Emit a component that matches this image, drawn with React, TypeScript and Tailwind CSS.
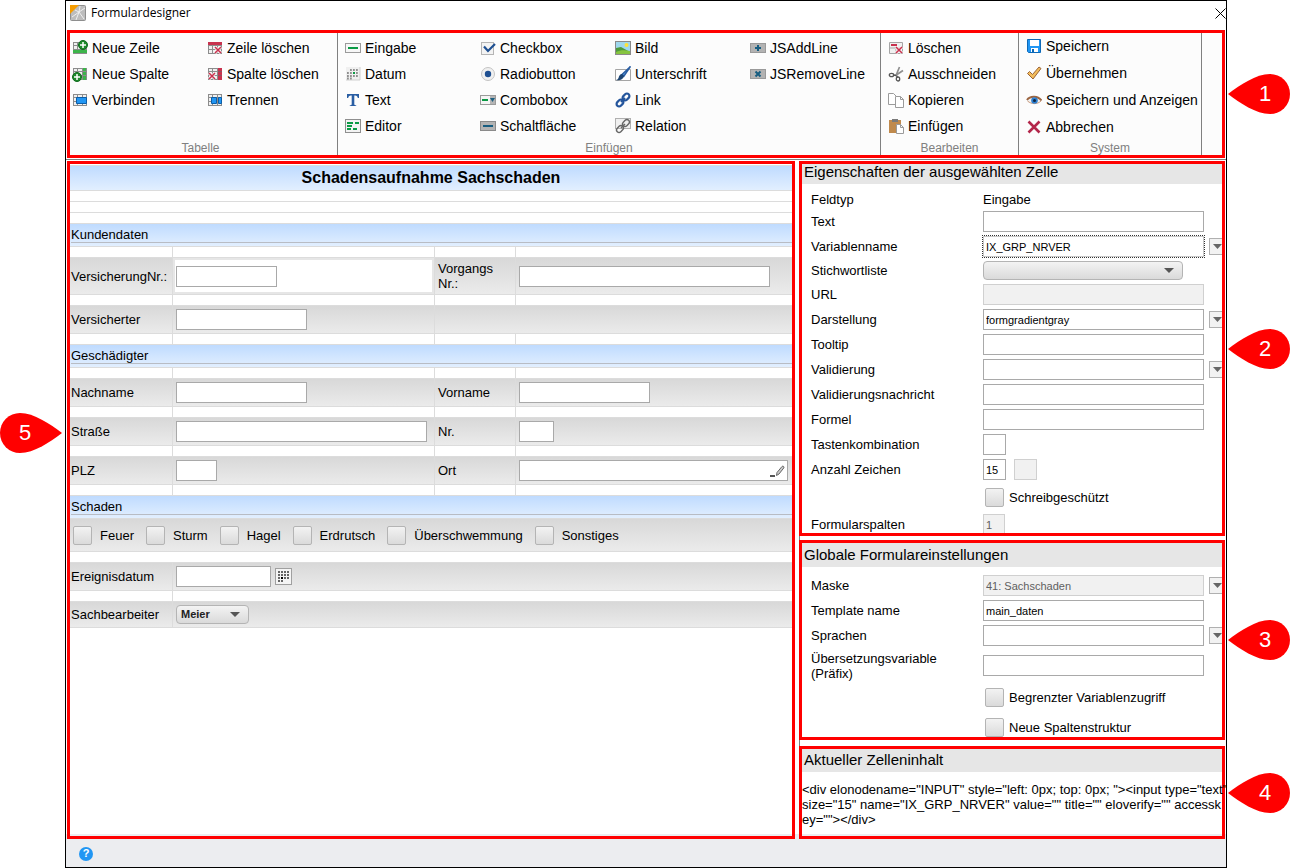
import type { ReactNode } from "react";

/* icons */

const Svg = ({ children }: { children: ReactNode }) => (
  <svg width="16" height="16" viewBox="0 0 16 16" fill="none" className="shrink-0">
    {children}
  </svg>
);

const Grid = () => (
  <g shapeRendering="crispEdges">
    <rect x="1" y="2" width="14" height="12" fill="#f0f0f0" />
    <path d="M1 2.500h14M1 5.500h14M1 9.500h14M1 13.500h14M1.500 2v12M5.500 2v12M10.500 2v12M14.500 2v12" stroke="#8c8c8c" />
  </g>
);

const Plus = ({ x, y }: { x: number; y: number }) => (
  <g>
    <circle cx={x} cy={y} r="4.5" fill="#1f8a2c" stroke="#0f6b1d" />
    <path d={`M${x - 3} ${y}h6M${x} ${y - 3}v6`} stroke="#fff" strokeWidth="1.5" />
  </g>
);

const RedX = ({ x, y }: { x: number; y: number }) => (
  <g>
    <path d={`M${x} ${y}l6 6m0-6l-6 6`} stroke="#fff" strokeWidth="3" />
    <path d={`M${x} ${y}l6 6m0-6l-6 6`} stroke="#c8324e" strokeWidth="1.6" />
  </g>
);

const RowAddIcon = () => (
  <Svg>
    <Grid />
    <path d="M1 10h14v4H1z" fill="#3cb54a" />
    <path d="M1 13.500h14" stroke="#8c8c8c" />
    <Plus x={11} y={5} />
  </Svg>
);
const ColAddIcon = () => (
  <Svg>
    <Grid />
    <path d="M11 2h3v12h-3z" fill="#3cb54a" />
    <path d="M11 5.500h3M11 9.500h3" stroke="#8c8c8c" />
    <Plus x={5} y={11} />
  </Svg>
);
const RowDelIcon = () => (
  <Svg>
    <Grid />
    <path d="M1 2h14v3H1z" fill="#c8324e" />
    <RedX x={8} y={7} />
  </Svg>
);
const ColDelIcon = () => (
  <Svg>
    <Grid />
    <path d="M11 2h4v12h-4z" fill="#c8324e" />
    <path d="M11 5.500h4M11 9.500h4" stroke="#8c5560" />
    <RedX x={2} y={7} />
  </Svg>
);
const MergeIcon = () => (
  <Svg>
    <Grid />
    <path d="M4.500 5.500h10v6h-10z" fill="#2196f3" stroke="#0d5fa8" />
  </Svg>
);
const SplitIcon = () => (
  <Svg>
    <Grid />
    <path d="M4.500 5.500h5v6h-5zM11.500 5.500h3v6h-3z" fill="#2196f3" stroke="#0d5fa8" />
  </Svg>
);
const InputIcon = () => (
  <Svg>
    <rect x="0.5" y="3.500" width="15" height="9" fill="#f7f7f7" stroke="#9b9b9b" />
    <path d="M3 8h10" stroke="#0a9a44" strokeWidth="2" />
  </Svg>
);
const DateIcon = () => (
  <Svg>
    <rect x="1" y="1" width="14" height="13" fill="#f0f0f0" />
    <path d="M15 1v13H1" stroke="#d0d0d0" />
    <path d="M5 4h9M2 7h12M2 10h12M2 12.500h6" stroke="#8f8f8f" strokeWidth="1.800" strokeDasharray="1.800 1.200" />
    <path d="M8 6h2v2H8z" fill="#0a9a44" />
  </Svg>
);
const TextIcon = () => (
  <Svg>
    <path d="M2 2h12v4h-1.200c-.3-1.600-.9-2.600-2.800-2.600h-.7v8.600c0 1 .4 1.200 1.900 1.300V14H4.800v-.7c1.500-.1 1.900-.3 1.900-1.300V3.400H6C4.100 3.400 3.500 4.400 3.200 6H2z" fill="#2a5ea3" />
  </Svg>
);
const EditorIcon = () => (
  <Svg>
    <rect x="0.5" y="1.500" width="15" height="13" fill="#f3f3f3" stroke="#8f8f8f" />
    <path d="M2 5h6M10 5h4M2 8h5M2 11h4M8 11h4" stroke="#0a9a44" strokeWidth="2" />
  </Svg>
);
const CheckIcon = () => (
  <Svg>
    <rect x="1.500" y="2.500" width="12" height="12" fill="#f3f3f3" stroke="#b5b5b5" />
    <path d="M4 6.500l4 4.500 7-7" stroke="#1e4f91" strokeWidth="2.200" />
  </Svg>
);
const RadioIcon = () => (
  <Svg>
    <circle cx="8" cy="8" r="6.500" fill="#f0f0f0" stroke="#c4c4c4" />
    <circle cx="8" cy="8" r="3.200" fill="#1e4f91" />
  </Svg>
);
const ComboIcon = () => (
  <Svg>
    <rect x="0.5" y="3.500" width="15" height="9" fill="#f5f5f5" stroke="#9b9b9b" />
    <path d="M10 4h5v8h-5z" fill="#b5b5b5" />
    <path d="M2 8h6" stroke="#0a9a44" strokeWidth="2" />
    <path d="M10 6h5l-2.500 4z" fill="#1d5f80" />
  </Svg>
);
const ButtonIcon = () => (
  <Svg>
    <rect x="0.5" y="3.500" width="15" height="9" fill="#b3b3b3" stroke="#8a8a8a" />
    <path d="M3 8h10" stroke="#175d80" strokeWidth="2" />
  </Svg>
);
const ImageIcon = () => (
  <Svg>
    <rect x="0.5" y="1.500" width="15" height="13" fill="#9fd8ee" stroke="#8a8a8a" />
    <circle cx="11.500" cy="5" r="2" fill="#ffe338" />
    <path d="M1 8l5-1 9 5v2H1z" fill="#4d9a3c" />
    <path d="M1 12c4-2 9-2 14-1v3H1z" fill="#86c440" />
  </Svg>
);
const SignIcon = () => (
  <Svg>
    <path d="M0.500 3.500h15v11h-15z" fill="#fff" stroke="#a5a5a5" />
    <path d="M15.500.5L7 8.500l1.800 1.800z" fill="#5b9bdc" stroke="#2a5ea3" strokeWidth="1.500" />
    <path d="M7 8c-2 0-3 2-3.500 4-.5 1-1.500 2-2.500 2 3 1 7 0 8-4z" fill="#1e4674" />
  </Svg>
);
const ChainIcon = ({ color, width }: { color: string; width: number }) => (
  <g stroke={color} strokeWidth={width}>
    <rect x="-3.800" y="-2.500" width="7.600" height="5" rx="2.500" transform="translate(11 5) rotate(-45)" />
    <rect x="-3.800" y="-2.500" width="7.600" height="5" rx="2.500" transform="translate(5 11) rotate(-45)" />
    <path d="M6 10l4-4" />
  </g>
);
const LinkIcon = () => (
  <Svg>
    <ChainIcon color="#24559c" width={2.2} />
  </Svg>
);
const RelationIcon = () => (
  <Svg>
    <rect x="0.5" y="0.500" width="15" height="10" fill="#f0f0f0" stroke="#b0b0b0" />
    <ChainIcon color="#666" width={1.4} />
  </Svg>
);
const JsAddIcon = () => (
  <Svg>
    <rect x="0.5" y="3.500" width="15" height="9" fill="#b3b3b3" stroke="#9a9a9a" />
    <path d="M5 8h6M8 5v6" stroke="#175d80" strokeWidth="2" />
  </Svg>
);
const JsRemoveIcon = () => (
  <Svg>
    <rect x="0.5" y="3.500" width="15" height="9" fill="#b3b3b3" stroke="#9a9a9a" />
    <path d="M5.500 5.500l5 5m0-5l-5 5" stroke="#175d80" strokeWidth="2" />
  </Svg>
);
const DeleteIcon = () => (
  <Svg>
    <path d="M1.500 2.500h13v11h-13zM1.500 8h13M8 8v6" fill="#f0f0f0" stroke="#a5a5a5" />
    <path d="M3 5h6" stroke="#c8324e" strokeWidth="2" />
    <RedX x={8} y={7} />
  </Svg>
);
const ScissorsIcon = () => (
  <Svg>
    <path d="M8 9.500L11.500 1M7.500 9.500L15 4.500" stroke="#8f8f8f" strokeWidth="1.700" />
    <path d="M8 9.500l-2.500-.5M8.500 9.500l1 2" stroke="#555" strokeWidth="1.500" />
    <ellipse cx="3.500" cy="9" rx="2.200" ry="1.700" stroke="#555" strokeWidth="1.300" />
    <ellipse cx="10" cy="13" rx="1.700" ry="2" stroke="#555" strokeWidth="1.300" />
  </Svg>
);
const CopyIcon = () => (
  <Svg>
    <path d="M0.500 1.500h5l3 3v8h-8z" fill="#fff" stroke="#9b9b9b" />
    <path d="M7.500 4.500h5l3 3v8h-8z" fill="#fff" stroke="#9b9b9b" />
    <path d="M12.500 4.500v3h3" stroke="#9b9b9b" />
  </Svg>
);
const PasteIcon = () => (
  <Svg>
    <path d="M1 2h12v13H1z" fill="#c08a4d" />
    <path d="M4 1h6v3H4z" fill="#7a7a7a" />
    <path d="M8.500 6.500h4l3 3v6h-7z" fill="#fff" stroke="#9b9b9b" />
    <path d="M12.500 6.500v3h3" stroke="#9b9b9b" />
  </Svg>
);
const SaveIcon = () => (
  <Svg>
    <path d="M1.500 1.500h13v13h-12l-1-1z" fill="#2196f3" stroke="#0c69b8" />
    <path d="M4 2h9v6H4z" fill="#fff" />
    <path d="M5 10h7v4H5z" fill="#fff" />
    <path d="M6 11h2v3H6z" fill="#0c69b8" />
  </Svg>
);
const ApplyIcon = () => (
  <Svg>
    <path d="M1.500 8.500l2-2 3 3 6.500-7.500 2 1.500-8 10.500z" fill="#f3bd5c" stroke="#9a6234" />
  </Svg>
);
const EyeIcon = () => (
  <Svg>
    <path d="M1 8.500c3-4.500 11-4.500 14.500 0-4 4-11 4-14.500 0z" fill="#f1f1f1" />
    <path d="M1 8c3-4.500 11-4.500 14.500.5" stroke="#9b6440" strokeWidth="2" />
    <path d="M1.500 9c4 3.500 10 3.500 13.500 0" stroke="#c99a7c" />
    <circle cx="8.500" cy="8.500" r="3.300" fill="#2d7fd0" />
    <circle cx="8.500" cy="8.500" r="1.500" fill="#0d2440" />
  </Svg>
);
const CancelIcon = () => (
  <Svg>
    <path d="M2.500 2.500l11 11m0-11l-11 11" stroke="#b3264a" strokeWidth="2.600" />
  </Svg>
);

/* numbered marker next to a framed area */
const Marker = ({ n }: { n: number }) => (
  <div className="absolute top-1/2 left-full ml-[6px] h-10 w-[62px] -translate-y-1/2">
    <svg width="62" height="40" viewBox="0 0 62 40" className="absolute inset-0">
      <path d="M0 20C12 11 28 0 42 0a20 20 0 0 1 0 40C28 40 12 29 0 20z" fill="#ff0000" />
    </svg>
    <span className="relative block w-[74px] text-center text-[22px] leading-10 text-white">{n}</span>
  </div>
);

/* ribbon */

const Tool = ({ icon, text }: { icon: ReactNode; text: string }) => (
  <button className="flex items-center gap-1 text-left whitespace-nowrap">
    {icon}
    {text}
  </button>
);

const GroupLabel = ({ children }: { children: ReactNode }) => (
  <div className="mt-auto text-center text-xs leading-[14px] text-[#808080]">{children}</div>
);

/* form controls */

const box = "h-[21px] border border-[#a9a9a9] bg-white px-[2px] text-[11px] text-black outline-black focus:outline-1 focus:outline-dotted";
const boxOff = "h-[21px] border border-[#d0d0d0] bg-[#f1f1f1] px-[2px] text-[11px] text-[#606060]";
const check = "size-[19px] shrink-0 appearance-none rounded-[2px] border border-[#b4b4b4] bg-linear-to-b from-[#f3f3f3] to-[#dadada]";
const drop = "h-[19px] w-full appearance-none rounded-[4px] border border-[#b4b4b4] bg-linear-to-b from-[#f3f3f3] to-[#dadada] pl-1 text-[11px] font-bold text-[#222222]";

const Arrow = () => (
  <svg width="10" height="5" viewBox="0 0 10 5" className="pointer-events-none absolute top-[7px] right-[9px]">
    <path d="M0 0h10L5 5z" fill="#555" />
  </svg>
);

const DropButton = ({ label }: { label: string }) => (
  <button aria-label={label} className="ml-[5px] flex h-[17px] w-[17px] shrink-0 items-center border border-[#b0b0b0] bg-[#f2f2f2] pl-[3px]">
    <svg width="9" height="5" viewBox="0 0 9 5">
      <path d="M0 0h9L4.500 5z" fill="#666" />
    </svg>
  </button>
);

/* line of the property panels */
const Prop = ({ label, id, h = "h-[25px]", children }: { label?: string; id?: string; h?: string; children: ReactNode }) => (
  <div className={`flex items-center ${h}`}>
    <div className="w-[181px] shrink-0 pr-8 pl-[9px]">{label && <label htmlFor={id}>{label}</label>}</div>
    {children}
  </div>
);

const PanelCheck = ({ id, label }: { id: string; label: string }) => (
  <div className="flex items-center gap-[5px] pl-[2px]">
    <input id={id} type="checkbox" className={check} />
    <label htmlFor={id}>{label}</label>
  </div>
);

/* lines of the form table */

const cols = "grid grid-cols-[103px_262fr_81px_276fr] border-b border-[#dcdcdc]";
const gray = "bg-linear-to-b from-[#d8d8d8] to-[#ebebeb]";
const cell = "flex items-center border-r border-[#dcdcdc] pl-[3px]";
const first = "flex items-center border-r border-[#dcdcdc] pl-px";

const Blank = () => <div className="h-[11px] border-b border-[#dcdcdc]" />;

const BlankCols = () => (
  <div className={`${cols} h-[11px]`}>
    <div className="border-r border-[#dcdcdc]" />
    <div className="border-r border-[#dcdcdc]" />
    <div className="border-r border-[#dcdcdc]" />
    <div />
  </div>
);

const Section = ({ children }: { children: ReactNode }) => (
  <div className="h-[23px] border-b border-[#dcdcdc] bg-linear-to-b from-[#bfdbff] to-[#e2efff] pl-px">
    <h2 className="border-b border-[#b8bcc4] pt-[3px] leading-[15px]">{children}</h2>
  </div>
);

export default function App() {
  return (
    <div className="flex min-h-screen bg-white pr-16 pl-[65px] font-['Liberation_Sans',Arial,sans-serif] text-[13px] leading-[15px] text-black">
      <div className="flex flex-1 flex-col border border-black bg-white">
        {/* title bar */}
        <header className="mb-[5px] flex h-6 items-center">
          <svg width="16" height="16" viewBox="0 0 16 16" className="ml-1">
            <rect x="0.5" y="0.5" width="15" height="15" rx="1" fill="#bdbdbd" stroke="#8e8e8e" />
            <path d="M2 12l7-5 1-6M9 7l6-4M9 7l5 7M9 7l-3 8M5 5l4 2" stroke="#efefef" fill="none" />
            <path d="M0 0h9L0 9z" fill="#f59c00" />
          </svg>
          <h1 className="ml-[5px] font-['Open_Sans',sans-serif] text-xs">Formulardesigner</h1>
          <button aria-label="Schließen" className="ml-auto">
            <svg width="11" height="11" viewBox="0 0 11 11">
              <path d="M.5.5l10 10m0-10l-10 10" stroke="#000" />
            </svg>
          </button>
        </header>

        {/* ribbon */}
        <div className="border-b border-[#808080] pb-px">
          <section className="relative mx-px flex h-32 border-3 border-[#ff0000] bg-[#fcfcfc] text-sm">
            <div className="flex w-[268px] flex-col border-r border-[#808080] pt-[2px] pl-[2px]">
              <div className="grid grid-flow-col auto-cols-[135px] grid-rows-[repeat(3,26px)]">
                <Tool icon={<RowAddIcon />} text="Neue Zeile" />
                <Tool icon={<ColAddIcon />} text="Neue Spalte" />
                <Tool icon={<MergeIcon />} text="Verbinden" />
                <Tool icon={<RowDelIcon />} text="Zeile löschen" />
                <Tool icon={<ColDelIcon />} text="Spalte löschen" />
                <Tool icon={<SplitIcon />} text="Trennen" />
              </div>
              <div className="mt-auto pr-2">
                <GroupLabel>Tabelle</GroupLabel>
              </div>
            </div>
            <div className="flex w-[543px] flex-col border-r border-[#808080] pt-[2px]">
              <div className="grid grid-flow-col auto-cols-[135px] grid-rows-[repeat(4,26px)] pl-[7px]">
                <Tool icon={<InputIcon />} text="Eingabe" />
                <Tool icon={<DateIcon />} text="Datum" />
                <Tool icon={<TextIcon />} text="Text" />
                <Tool icon={<EditorIcon />} text="Editor" />
                <Tool icon={<CheckIcon />} text="Checkbox" />
                <Tool icon={<RadioIcon />} text="Radiobutton" />
                <Tool icon={<ComboIcon />} text="Combobox" />
                <Tool icon={<ButtonIcon />} text="Schaltfläche" />
                <Tool icon={<ImageIcon />} text="Bild" />
                <Tool icon={<SignIcon />} text="Unterschrift" />
                <Tool icon={<LinkIcon />} text="Link" />
                <Tool icon={<RelationIcon />} text="Relation" />
                <Tool icon={<JsAddIcon />} text="JSAddLine" />
                <Tool icon={<JsRemoveIcon />} text="JSRemoveLine" />
              </div>
              <GroupLabel>Einfügen</GroupLabel>
            </div>
            <div className="flex w-[138px] flex-col border-r border-[#808080] pt-[2px]">
              <div className="grid grid-rows-[repeat(4,26px)] pl-[7px]">
                <Tool icon={<DeleteIcon />} text="Löschen" />
                <Tool icon={<ScissorsIcon />} text="Ausschneiden" />
                <Tool icon={<CopyIcon />} text="Kopieren" />
                <Tool icon={<PasteIcon />} text="Einfügen" />
              </div>
              <GroupLabel>Bearbeiten</GroupLabel>
            </div>
            <div className="flex w-[183px] flex-col border-r border-[#808080]">
              <div className="grid grid-rows-[26px_27px_27px_27px] pl-[7px]">
                <Tool icon={<SaveIcon />} text="Speichern" />
                <Tool icon={<ApplyIcon />} text="Übernehmen" />
                <Tool icon={<EyeIcon />} text="Speichern und Anzeigen" />
                <Tool icon={<CancelIcon />} text="Abbrechen" />
              </div>
              <GroupLabel>System</GroupLabel>
            </div>
            <Marker n={1} />
          </section>
        </div>

        <main className="relative z-10 flex flex-1 gap-1 px-px pt-px">
          {/* form */}
          <section className="relative flex-1 border-3 border-[#ff0000]">
            <div className="mt-px border-t border-[#dcdcdc]">
              <h2 className="h-[25px] border-b border-[#dcdcdc] bg-linear-to-b from-[#bfdbff] to-[#e2efff] text-center text-base leading-6 font-bold">
                Schadensaufnahme Sachschaden
              </h2>
              <Blank />
              <Blank />
              <Blank />
              <Section>Kundendaten</Section>
              <BlankCols />
              <div className={`${cols} ${gray} h-[37px]`}>
                <label htmlFor="vnr" className={first}>VersicherungNr.:</label>
                <div className="flex border-r border-[#dcdcdc]">
                  <div className="flex flex-1 items-center border-2 border-[#e6e6e6] bg-white pl-px">
                    <input id="vnr" className={`${box} w-[101px]`} />
                  </div>
                </div>
                <label htmlFor="vorgang" className={`${cell} pr-4`}>Vorgangs Nr.:</label>
                <div className="flex items-center pl-[3px]">
                  <input id="vorgang" className={`${box} w-[251px]`} />
                </div>
              </div>
              <BlankCols />
              <div className={`${cols} ${gray} h-7`}>
                <label htmlFor="versicherter" className={first}>Versicherter</label>
                <div className={cell}>
                  <input id="versicherter" className={`${box} w-[131px]`} />
                </div>
              </div>
              <BlankCols />
              <Section>Geschädigter</Section>
              <BlankCols />
              <div className={`${cols} ${gray} h-7`}>
                <label htmlFor="nachname" className={first}>Nachname</label>
                <div className={cell}>
                  <input id="nachname" className={`${box} w-[131px]`} />
                </div>
                <label htmlFor="vorname" className={cell}>Vorname</label>
                <div className="flex items-center pl-[3px]">
                  <input id="vorname" className={`${box} w-[131px]`} />
                </div>
              </div>
              <BlankCols />
              <div className={`${cols} ${gray} h-7`}>
                <label htmlFor="strasse" className={first}>Straße</label>
                <div className={cell}>
                  <input id="strasse" className={`${box} w-[251px]`} />
                </div>
                <label htmlFor="nr" className={cell}>Nr.</label>
                <div className="flex items-center pl-[3px]">
                  <input id="nr" className={`${box} w-[35px]`} />
                </div>
              </div>
              <BlankCols />
              <div className={`${cols} ${gray} h-7`}>
                <label htmlFor="plz" className={first}>PLZ</label>
                <div className={cell}>
                  <input id="plz" className={`${box} w-[41px]`} />
                </div>
                <label htmlFor="ort" className={cell}>Ort</label>
                <div className="relative flex items-center pr-1 pl-[3px]">
                  <input id="ort" className={`${box} w-full`} />
                  <svg width="15" height="12" viewBox="0 0 15 12" className="absolute right-[7px]">
                    <path d="M0 10h5v2H0z" fill="#555" />
                    <path d="M6.500 10.500l.5-3L12 1.500c1-1 2.500.2 1.800 1.400L9 9z" fill="#ccc" stroke="#666" />
                  </svg>
                </div>
              </div>
              <BlankCols />
              <Section>Schaden</Section>
              <div className={`${gray} flex h-[33px] items-center gap-3 border-b border-[#dcdcdc] pl-[3px]`}>
                {["Feuer", "Sturm", "Hagel", "Erdrutsch", "Überschwemmung", "Sonstiges"].map((s) => (
                  <label key={s} className="flex items-center gap-2">
                    <input type="checkbox" className={check} />
                    {s}
                  </label>
                ))}
              </div>
              <Blank />
              <div className={`${gray} flex h-7 border-b border-[#dcdcdc]`}>
                <label htmlFor="datum" className={`${first} w-[103px]`}>Ereignisdatum</label>
                <div className="flex items-center pl-[3px]">
                  <input id="datum" className={`${box} w-[95px]`} />
                  <button aria-label="Kalender" className="ml-1 flex size-[17px] items-center justify-center border border-[#a0a0a0] bg-[#f5f5f5]">
                    <svg width="11" height="11" viewBox="0 0 11 11" stroke="#666" strokeWidth="2" strokeDasharray="2 1">
                      <path d="M0 1h11M0 4h11M0 7h11M0 10h6" />
                      <path d="M3 7h2" stroke="#000" strokeDasharray="none" />
                    </svg>
                  </button>
                </div>
              </div>
              <div className="flex h-[11px] border-b border-[#dcdcdc]">
                <div className="w-[103px] border-r border-[#dcdcdc]" />
              </div>
              <div className={`${gray} flex h-[26px] border-b border-[#dcdcdc]`}>
                <label htmlFor="bearbeiter" className={`${first} w-[103px]`}>Sachbearbeiter</label>
                <div className="flex items-center pl-[3px]">
                  <div className="relative w-[73px]">
                    <select id="bearbeiter" className={drop}>
                      <option>Meier</option>
                    </select>
                    <Arrow />
                  </div>
                </div>
              </div>
            </div>
            {/* marker on the left side */}
            <div className="absolute top-[40%] right-full mr-2 h-10 w-[62px] -translate-y-1/2">
              <svg width="62" height="40" viewBox="0 0 62 40" className="absolute inset-0">
                <path d="M62 20C50 11 34 0 20 0a20 20 0 0 0 0 40C34 40 50 29 62 20z" fill="#ff0000" />
              </svg>
              <span className="relative block w-[50px] text-center text-[22px] leading-10 text-white">5</span>
            </div>
          </section>

          <aside className="flex w-[426px] shrink-0 flex-col">
            {/* cell properties */}
            <section className="relative border-3 border-[#ff0000]">
              <h2 className="h-5 bg-[#e6e6e6] pl-[2px] text-[15px] leading-4">Eigenschaften der ausgewählten Zelle</h2>
              <div className="overflow-hidden pt-[6px]">
                <div className="flex h-[19px] items-center">
                  <span className="w-[181px] pl-[9px]">Feldtyp</span>
                  <span>Eingabe</span>
                </div>
                <Prop label="Text" id="text">
                  <input id="text" className={`${box} w-[221px]`} />
                </Prop>
                <Prop label="Variablenname" id="variable">
                  <input id="variable" defaultValue="IX_GRP_NRVER" className="h-[21px] w-[221px] shrink-0 border border-[#c8c8c8] bg-white px-[2px] text-[11px] outline-1 outline-[#333333] outline-dotted" />
                  <DropButton label="Variable wählen" />
                </Prop>
                <Prop label="Stichwortliste" id="stichwort" h="h-[23px]">
                  <div className="relative w-[200px]">
                    <select id="stichwort" className={drop}>
                      <option></option>
                    </select>
                    <Arrow />
                  </div>
                </Prop>
                <Prop label="URL" id="url">
                  <input id="url" disabled className={`${boxOff} w-[221px]`} />
                </Prop>
                <Prop label="Darstellung" id="darstellung">
                  <input id="darstellung" defaultValue="formgradientgray" className={`${box} w-[221px] shrink-0`} />
                  <DropButton label="Darstellung wählen" />
                </Prop>
                <Prop label="Tooltip" id="tooltip">
                  <input id="tooltip" className={`${box} w-[221px]`} />
                </Prop>
                <Prop label="Validierung" id="validierung">
                  <input id="validierung" className={`${box} w-[221px] shrink-0`} />
                  <DropButton label="Validierung wählen" />
                </Prop>
                <Prop label="Validierungsnachricht" id="nachricht">
                  <input id="nachricht" className={`${box} w-[221px]`} />
                </Prop>
                <Prop label="Formel" id="formel">
                  <input id="formel" className={`${box} w-[221px]`} />
                </Prop>
                <Prop label="Tastenkombination" id="tasten">
                  <input id="tasten" className={`${box} w-[23px]`} />
                </Prop>
                <Prop label="Anzahl Zeichen" id="anzahl">
                  <input id="anzahl" defaultValue="15" className={`${box} w-[23px]`} />
                  <input aria-label="Maximale Zeichen" disabled className={`${boxOff} ml-2 w-[23px]`} />
                </Prop>
                <Prop h="h-[30px]">
                  <PanelCheck id="schutz" label="Schreibgeschützt" />
                </Prop>
                <div className="h-[21px] overflow-hidden">
                  <Prop label="Formularspalten" id="spalten">
                    <input id="spalten" disabled defaultValue="1" className={`${boxOff} w-[22px]`} />
                  </Prop>
                </div>
              </div>
              <Marker n={2} />
            </section>

            <div className="h-1 border-l border-[#808080]" />

            {/* global settings */}
            <section className="relative border-3 border-[#ff0000]">
              <h2 className="h-6 bg-[#e6e6e6] pl-[2px] text-[15px] leading-6">Globale Formulareinstellungen</h2>
              <div className="overflow-hidden pt-[6px]">
                <Prop label="Maske" id="maske">
                  <input id="maske" disabled defaultValue="41: Sachschaden" className={`${boxOff} w-[221px] shrink-0`} />
                  <DropButton label="Maske wählen" />
                </Prop>
                <Prop label="Template name" id="template">
                  <input id="template" defaultValue="main_daten" className={`${box} w-[221px]`} />
                </Prop>
                <Prop label="Sprachen" id="sprachen">
                  <input id="sprachen" className={`${box} w-[221px] shrink-0`} />
                  <DropButton label="Sprache wählen" />
                </Prop>
                <Prop label="Übersetzungsvariable (Präfix)" id="praefix" h="h-[35px]">
                  <input id="praefix" className={`${box} w-[221px]`} />
                </Prop>
                <Prop h="h-[29px]">
                  <PanelCheck id="zugriff" label="Begrenzter Variablenzugriff" />
                </Prop>
                <div className="h-[25px] overflow-hidden">
                  <Prop h="h-[30px]">
                    <PanelCheck id="struktur" label="Neue Spaltenstruktur" />
                  </Prop>
                </div>
              </div>
              <Marker n={3} />
            </section>

            <div className="h-[6px] border-l border-[#808080]" />

            {/* cell content */}
            <section className="relative flex-1 border-3 border-[#ff0000]">
              <h2 className="h-[23px] bg-[#e6e6e6] pl-[2px] text-[15px] leading-[22px]">Aktueller Zelleninhalt</h2>
              <pre className="pt-[10px] font-['Liberation_Sans',Arial,sans-serif]">
                {'<div elonodename="INPUT" style="left: 0px; top: 0px; "><input type="text"\nsize="15" name="IX_GRP_NRVER" value="" title="" eloverify="" accessk\ney=""></div>'}
              </pre>
              <Marker n={4} />
            </section>
          </aside>
        </main>

        {/* footer */}
        <footer className="-mt-[5px] flex h-[33px] items-center bg-[#ecedf0] pt-[6px] pl-[13px]">
          <button aria-label="Hilfe" className="flex size-[14px] items-center justify-center rounded-full bg-[#2196f3] text-[11px] font-bold text-white">
            ?
          </button>
        </footer>
      </div>
    </div>
  );
}
